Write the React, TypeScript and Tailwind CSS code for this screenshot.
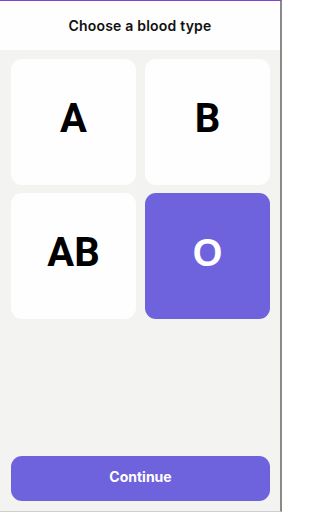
import React from "react";

export default function App() {
  const types = ["A", "B", "AB", "O"];
  const selected = "O";
  return (
    <div className="w-[282px] h-[512px] flex flex-col bg-[#f3f4f2] border-t border-t-[#7b44d3] border-r-2 border-r-[#8a8a8a] border-b border-b-[#cfcfcf] overflow-hidden">
      <div className="h-[49px] shrink-0 bg-[#fdfefd] flex items-center justify-center">
        <span className="text-[14px] font-semibold text-[#111] tracking-[0.2px]" style={{ fontFamily: "Inter, 'Noto Sans', sans-serif" }}>
          Choose a blood type
        </span>
      </div>
      <div className="flex-1 flex flex-col pl-[11px] pr-[10px] pt-[9px] pb-[10px]">
        <div className="grid grid-cols-2 gap-x-[9px] gap-y-[8px]">
          {types.map((t) => (
            <div
              key={t}
              className={
                t === selected
                  ? "h-[126px] rounded-[11px] bg-[#6f62dd] flex items-center justify-center pb-[7px]"
                  : "h-[126px] rounded-[11px] bg-[#fdfefd] flex items-center justify-center pb-[7px]"
              }
            >
              <span
                className={
                  t === selected
                    ? "text-[38px] font-bold text-white leading-none"
                    : "text-[40px] font-bold text-black leading-none"
                }
                style={{
                  fontFamily:
                    t === selected
                      ? "'Liberation Sans', Arial, sans-serif"
                      : "Roboto, 'Liberation Sans', sans-serif",
                }}
              >
                {t}
              </span>
            </div>
          ))}
        </div>
        <div className="flex-1" />
        <button className="h-[45px] w-full rounded-[11px] bg-[#6f62dd] flex items-center justify-center pb-[5px]">
          <span className="text-[14px] font-bold text-white" style={{ fontFamily: "Inter, 'Noto Sans', sans-serif" }}>
            Continue
          </span>
        </button>
      </div>
    </div>
  );
}
